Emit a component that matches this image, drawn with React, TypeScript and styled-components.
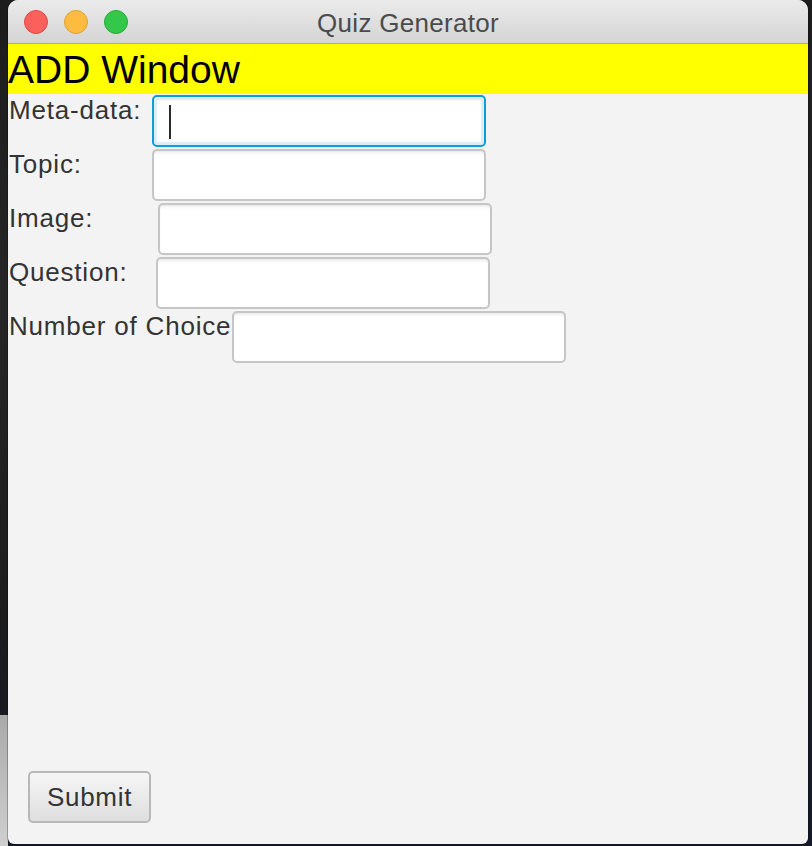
import React from "react";
import styled, { createGlobalStyle } from "styled-components";

const GlobalStyle = createGlobalStyle`
  html, body {
    margin: 0;
    padding: 0;
    width: 812px;
    height: 846px;
    overflow: hidden;
  }
  body {
    font-family: "Liberation Sans", Arial, sans-serif;
    background:
      linear-gradient(to bottom, transparent 0, transparent 715px, #a9a9a9 715px, #cfcfcf 846px) left top / 8px 846px no-repeat,
      linear-gradient(to bottom, #1c1c1c 0, #262626 300px, #1d1d1d 600px, #151a28 846px);
  }
`;

const Desktop = styled.div`
  width: 812px;
  height: 846px;
  display: flex;
  align-items: flex-start;
`;

const Window = styled.div`
  margin-left: 8px;
  width: 800px;
  height: 844px;
  border-radius: 10px 10px 6px 6px;
  overflow: hidden;
  background: #f3f3f3;
  display: flex;
  flex-direction: column;
  box-shadow: 0 0 0 1px rgba(0, 0, 0, 0.25);
`;

const TitleBar = styled.div`
  position: relative;
  height: 43px;
  flex-shrink: 0;
  border-bottom: 1px solid #ababab;
  background: linear-gradient(to bottom, #ebebeb, #d4d4d4);
  display: flex;
  align-items: center;
  justify-content: center;
`;

const Lights = styled.div`
  position: absolute;
  left: 16px;
  top: 10px;
  display: flex;
  gap: 16px;
`;

const Light = styled.span<{ $fill: string; $edge: string }>`
  width: 24px;
  height: 24px;
  border-radius: 50%;
  box-sizing: border-box;
  background: ${(p) => p.$fill};
  border: 1px solid ${(p) => p.$edge};
`;

const Title = styled.div`
  font-size: 26px;
  color: #4b4b4b;
  padding-top: 3px;
  letter-spacing: 0.3px;
`;

const Banner = styled.div`
  height: 50px;
  flex-shrink: 0;
  background: #ffff00;
  color: #000;
  font-size: 39px;
  line-height: 50px;
  padding-top: 1px;
  box-sizing: border-box;
  white-space: nowrap;
`;

const Form = styled.div`
  display: flex;
  flex-direction: column;
`;

const Row = styled.div`
  display: flex;
  align-items: flex-start;
  height: 54px;
`;

const Label = styled.div<{ $w: number }>`
  width: ${(p) => p.$w}px;
  flex-shrink: 0;
  padding-left: 1px;
  padding-top: 1px;
  box-sizing: border-box;
  font-size: 26px;
  letter-spacing: 0.8px;
  color: #333;
  white-space: nowrap;
`;

const FieldWrap = styled.div`
  position: relative;
  margin-top: 1px;
`;

const Field = styled.input<{ $focused?: boolean }>`
  display: block;
  width: 334px;
  height: 52px;
  box-sizing: border-box;
  margin: 0;
  padding: 0 14px;
  font-family: "Liberation Sans", Arial, sans-serif;
  font-size: 26px;
  border-radius: 5px;
  outline: none;
  background: linear-gradient(to bottom, #f3f3f3 0, #ffffff 5px);
  border: ${(p) => (p.$focused ? "2px solid #0a9fd8" : "2px solid #c6c6c6")};
  box-shadow: ${(p) =>
    p.$focused
      ? "inset 0 0 0 3px #dcedf7"
      : "inset 0 1px 2px rgba(0,0,0,0.05)"};
`;

const Caret = styled.span`
  position: absolute;
  left: 17px;
  top: 10px;
  width: 2px;
  height: 34px;
  background: #2a2a2a;
`;

const Spacer = styled.div`
  flex: 1;
`;

const Footer = styled.div`
  padding: 0 0 21px 20px;
  display: flex;
`;

const Button = styled.button`
  width: 123px;
  height: 52px;
  box-sizing: border-box;
  border: 2px solid #b8b8b8;
  border-radius: 5px;
  background: linear-gradient(to bottom, #f6f6f6, #dedede);
  font-family: "Liberation Sans", Arial, sans-serif;
  font-size: 26px;
  letter-spacing: 0.7px;
  color: #333;
  padding: 0;
`;

const rows = [
  { label: "Meta-data:", w: 144, focused: true },
  { label: "Topic:", w: 144 },
  { label: "Image:", w: 150 },
  { label: "Question:", w: 148 },
  { label: "Number of Choice", w: 224 },
];

export default function App() {
  return (
    <>
      <GlobalStyle />
      <Desktop>
        <Window>
          <TitleBar>
            <Lights>
              <Light $fill="#fc605c" $edge="#df4944" />
              <Light $fill="#fdbc40" $edge="#dea032" />
              <Light $fill="#34c84a" $edge="#25a936" />
            </Lights>
            <Title>Quiz Generator</Title>
          </TitleBar>
          <Banner>ADD Window</Banner>
          <Form>
            {rows.map((r) => (
              <Row key={r.label}>
                <Label $w={r.w}>{r.label}</Label>
                <FieldWrap>
                  <Field $focused={r.focused} />
                  {r.focused && <Caret />}
                </FieldWrap>
              </Row>
            ))}
          </Form>
          <Spacer />
          <Footer>
            <Button>Submit</Button>
          </Footer>
        </Window>
      </Desktop>
    </>
  );
}
